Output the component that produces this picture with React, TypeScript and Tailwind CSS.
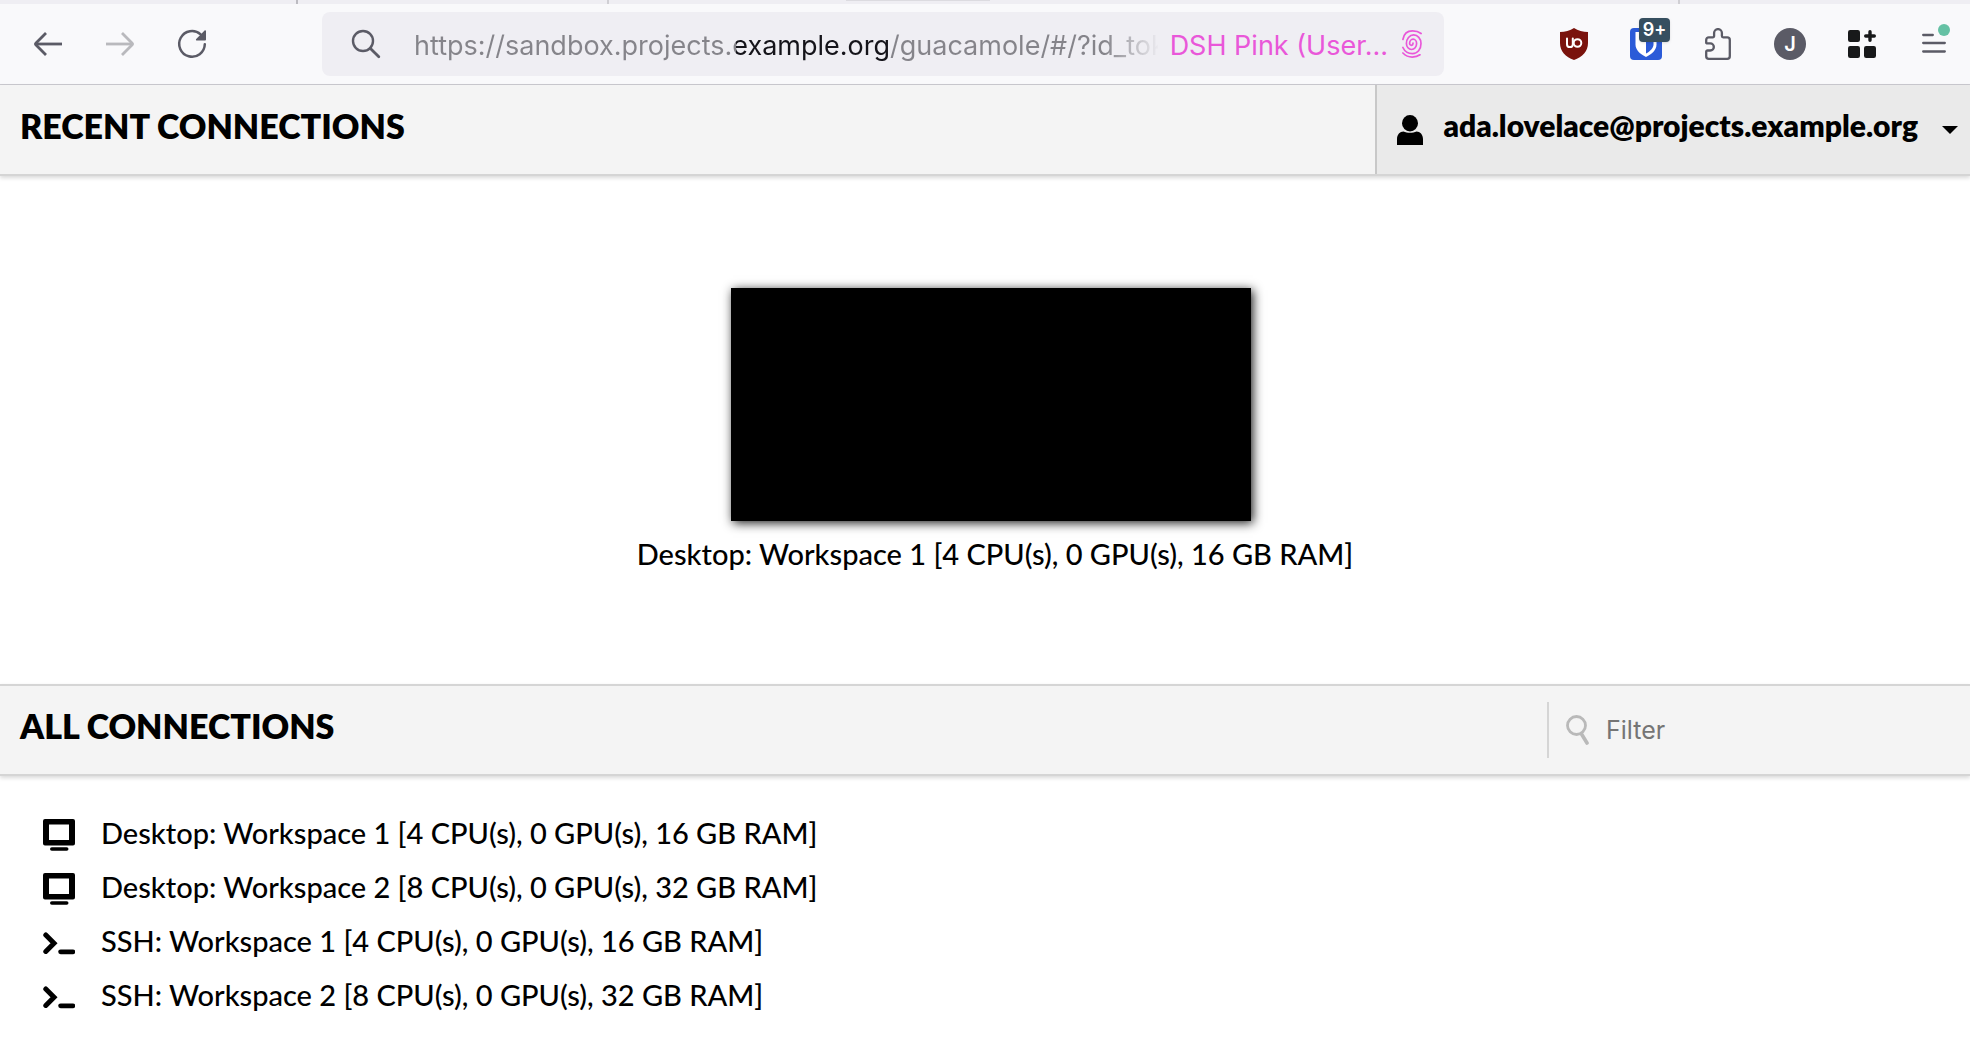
import type { ReactNode } from "react";

const connections = [
  { kind: "desktop", name: "Desktop: Workspace 1 [4 CPU(s), 0 GPU(s), 16 GB RAM]" },
  { kind: "desktop", name: "Desktop: Workspace 2 [8 CPU(s), 0 GPU(s), 32 GB RAM]" },
  { kind: "ssh", name: "SSH: Workspace 1 [4 CPU(s), 0 GPU(s), 16 GB RAM]" },
  { kind: "ssh", name: "SSH: Workspace 2 [8 CPU(s), 0 GPU(s), 32 GB RAM]" },
];

function ToolButton({ label, disabled, children }: { label: string; disabled?: boolean; children: ReactNode }) {
  return (
    <button
      type="button"
      aria-label={label}
      disabled={disabled}
      className="flex h-20 w-[72px] shrink-0 items-center justify-center"
    >
      {children}
    </button>
  );
}

function BackArrow({ className }: { className: string }) {
  return (
    <svg viewBox="0 0 32 32" className={className} fill="none" stroke="currentColor" strokeWidth="2.8">
      <path d="M30 16H4" />
      <path d="M14 5 3.8 15.2a1.1 1.1 0 0 0 0 1.6L14 27" strokeLinejoin="round" />
    </svg>
  );
}

function ReloadIcon() {
  return (
    <svg viewBox="0 0 32 32" className="size-8" fill="none">
      <path d="M28.8 16.2A12.8 12.8 0 1 1 24.6 6.4" stroke="#5b5b66" strokeWidth="2.5" strokeLinecap="round" />
      <path d="M30 3v8.6a.9.9 0 0 1-.9.9h-8.2c-.9 0-1.300-1-.7-1.600L28.600 2.400c.5-.5 1.400-.2 1.400.6Z" fill="#5b5b66" />
    </svg>
  );
}

function SearchIcon() {
  return (
    <svg viewBox="0 0 32 32" className="size-8 shrink-0" fill="none" stroke="#5b5b66" strokeLinecap="round">
      <circle cx="13" cy="13" r="10" strokeWidth="2.400" />
      <path d="m20.200 20.200 8.600 8.600" strokeWidth="2.800" />
    </svg>
  );
}

function FingerprintIcon() {
  return (
    <svg viewBox="0 0 20 28" className="h-7 w-5 shrink-0" fill="none" stroke="#e957d9" strokeWidth="1.700" strokeLinecap="round">
      <path d="M.9 9.500C1.800 4 5.500.9 10.500.9c3.500 0 6.500 1 8.600 2.600" />
      <path d="M11 13.200A1.700 2 0 0 1 7.600 13.400A3.500 4.200 0 0 1 14.600 13.400A5.100 6 0 0 1 4.400 13.600A7.300 8.600 0 0 1 19 13.400C19 19.500 15.500 23.600 10.500 23.600C5.500 23.600 2.500 21 .9 17.500" />
      <path d="M.9 23c2.600 2.600 5.700 4.100 9.300 4.100 3.200 0 5.800-.8 7.800-2.300" />
    </svg>
  );
}

function UblockIcon() {
  return (
    <svg viewBox="0 0 28 32" className="h-8 w-7">
      <path d="M14 0c4 2.600 9 4 14 4v11c0 8.500-5.500 14-14 17C5.500 29 0 23.500 0 15V4c5 0 10-1.400 14-4Z" fill="#7a130d" />
      <path d="M7 10.500v5.700a2.900 2.900 0 0 0 5.800 0v-5.700" fill="none" stroke="#fff" strokeWidth="2" strokeLinecap="round" />
      <circle cx="17.500" cy="15" r="3.800" fill="none" stroke="#fff" strokeWidth="2" />
    </svg>
  );
}

function BitwardenIcon() {
  return (
    <span className="relative block size-8">
      <svg viewBox="0 0 32 32" className="size-8">
        <rect width="32" height="32" rx="4" fill="#2b5bd8" />
        <path d="M5.500 4h21v12.500c0 5.500-4.500 9.500-10.500 12.500-6-3-10.500-7-10.500-12.500Z" fill="#fff" />
        <path d="M16 7h7.500v9.500c0 3.600-3.300 6.700-7.500 9.100Z" fill="#2b5bd8" />
      </svg>
      <span className="absolute -top-2.5 left-[9px] flex h-6 w-[31px] items-center justify-center rounded bg-[#364f60] font-['Inter',sans-serif] text-lg font-semibold text-white shadow-sm">
        9+
      </span>
    </span>
  );
}

function PuzzleIcon() {
  return (
    <svg viewBox="0 0 26 32" className="h-8 w-[26px]" fill="none" stroke="#5b5b66" strokeWidth="2.300" strokeLinejoin="round">
      <path d="M1.200 15V12a2.600 2.600 0 0 1 2.600-2.600h4a1.300 1.300 0 0 0 1.300-1.300V5a3.900 3.900 0 0 1 7.800 0v3.100a1.300 1.300 0 0 0 1.300 1.300h4a2.600 2.600 0 0 1 2.600 2.600v16.200a2.600 2.600 0 0 1-2.600 2.600H3.800a2.600 2.600 0 0 1-2.600-2.600v-4.400a1.300 1.300 0 0 1 1.300-1.300h2.800a3.550 3.550 0 0 0 0-7.100H2.200a1 1 0 0 1-1-1Z" />
    </svg>
  );
}

function GridPlusIcon() {
  return (
    <svg viewBox="0 0 28 28" className="size-7" fill="#18191a">
      <rect width="12" height="12" rx="2.200" />
      <rect y="16" width="12" height="12" rx="2.200" />
      <rect x="16" y="16" width="12" height="12" rx="2.200" />
      <path d="M22 1.700v8.600M17.700 6h8.600" stroke="#18191a" strokeWidth="3.400" strokeLinecap="round" />
    </svg>
  );
}

function MenuIcon() {
  return (
    <span className="relative block h-7 w-6">
      <svg viewBox="0 0 24 28" className="h-7 w-6" stroke="#5b5b66" strokeWidth="2.300" strokeLinecap="round">
        <path d="M1.200 5h9.600M1.200 13h21.600M1.200 21.500h21.600" />
      </svg>
      <span className="absolute -top-1.5 left-4 size-3 rounded-full bg-[#65c1a4]" />
    </span>
  );
}

function DesktopIcon() {
  return (
    <svg viewBox="0 0 32 32" className="size-8">
      <path fillRule="evenodd" d="M2 0h28a2 2 0 0 1 2 2v22.500a2 2 0 0 1-2 2H2a2 2 0 0 1-2-2V2a2 2 0 0 1 2-2Zm4 5.500v15.500h20V5.500Z" />
      <path d="M8.800 30h14.900" stroke="#000" strokeWidth="3.600" strokeLinecap="round" />
    </svg>
  );
}

function TerminalIcon() {
  return (
    <svg viewBox="0 0 32 32" className="size-8" fill="none" stroke="#000" strokeLinecap="round" strokeLinejoin="round">
      <path d="m2.800 8 8.200 8.200-8.200 8.200" strokeWidth="5" strokeLinejoin="miter" />
      <path d="M17.600 24.800h12.200" strokeWidth="4.800" />
    </svg>
  );
}

export default function App() {
  return (
    <div className="min-h-screen bg-white font-['Lato',sans-serif] text-black">
      <div className="flex h-1 bg-[#efeef3]">
        <span className="ml-[296px] w-0.5 bg-[#bcbbc1]" />
        <span className="ml-[309px] w-0.5 bg-[#d0cfd4]" />
        <span className="ml-[237px] h-px w-36 bg-[#dcdbe0]" />
        <span className="mr-[290px] ml-auto w-0.5 bg-[#d0cfd4]" />
      </div>

      <nav aria-label="Browser toolbar" className="flex items-center border-b border-[#cbcad0] bg-[#f9f9fb] pl-3">
        <ToolButton label="Back">
          <BackArrow className="size-8 text-[#5b5b66]" />
        </ToolButton>
        <ToolButton label="Forward" disabled>
          <BackArrow className="size-8 rotate-180 text-[#b9b9bd]" />
        </ToolButton>
        <ToolButton label="Reload">
          <ReloadIcon />
        </ToolButton>
        <div className="mx-[94px] flex h-16 min-w-0 flex-1 items-center rounded-lg bg-[#efeef3] pr-[22px] pl-7 font-['Inter',sans-serif] text-[27px]">
          <SearchIcon />
          <input
            type="text"
            aria-label="Address"
            defaultValue="https://sandbox.projects.example.org/guacamole/#/?id_token"
            className="ml-8 min-w-0 flex-1 bg-[linear-gradient(90deg,#85848a_322px,#15141a_322px,#15141a_475px,#85848a_475px,#85848a_690px,transparent_746px)] bg-clip-text pt-1 text-transparent outline-none"
          />
          <button type="button" className="ml-3 flex items-center gap-3.5 text-[#e957d9]">
            <span className="pt-1">DSH Pink (User...</span>
            <FingerprintIcon />
          </button>
        </div>
        <ToolButton label="uBlock Origin">
          <UblockIcon />
        </ToolButton>
        <ToolButton label="Bitwarden">
          <BitwardenIcon />
        </ToolButton>
        <ToolButton label="Extensions">
          <PuzzleIcon />
        </ToolButton>
        <ToolButton label="Account">
          <span className="flex size-8 items-center justify-center rounded-full bg-[#5b5b66] font-['Inter',sans-serif] text-xl font-semibold text-white">
            J
          </span>
        </ToolButton>
        <ToolButton label="Add-ons">
          <GridPlusIcon />
        </ToolButton>
        <ToolButton label="Menu">
          <MenuIcon />
        </ToolButton>
      </nav>

      <header className="flex h-[91px] items-stretch justify-between border-b-2 border-[#d5d5d5] bg-[#f4f4f4] shadow-[0_2px_4px_rgba(0,0,0,0.15)]">
        <h1 className="pt-4 pl-5 text-[34px] leading-[50px] font-extrabold">RECENT CONNECTIONS</h1>
        <button
          type="button"
          className="flex items-center border-l-2 border-[#c8c8c8] bg-[#eaeaea] pr-3 pl-5 text-[30px] font-extrabold"
        >
          <svg viewBox="0 0 26 30" className="h-[30px] w-[26px]">
            <ellipse cx="13" cy="8.200" rx="8" ry="8.200" />
            <path d="M0 30v-6c0-4.500 3-7.500 6.500-7.500 3.500 1.800 9.500 1.800 13 0 3.500 0 6.500 3 6.500 7.500v6Z" />
          </svg>
          <span className="ml-5 pb-2">ada.lovelace@projects.example.org</span>
          <svg viewBox="0 0 16 8" className="ml-6 h-2 w-4">
            <path d="M0 0h16L8 8Z" />
          </svg>
        </button>
      </header>

      <section className="flex h-[508px] flex-col items-center justify-center pt-2">
        <a href="#workspace-1" className="flex flex-col items-center text-[29px] leading-[54px] font-medium">
          <span className="mb-1.5 ml-3 h-[233px] w-[520px] bg-black shadow-[2px_2px_10px_rgba(0,0,0,0.9)]" />
          <span className="pl-5">{connections[0].name}</span>
        </a>
      </section>

      <section>
        <header className="flex h-[92px] items-center justify-between border-y-2 border-[#d5d5d5] bg-[#f4f4f4] shadow-[0_2px_4px_rgba(0,0,0,0.15)]">
          <h2 className="pb-2 pl-5 text-[34px] leading-[50px] font-extrabold">ALL CONNECTIONS</h2>
          <label className="flex h-14 w-[423px] items-center border-l-2 border-[#d5d5d5] pl-[17px]">
            <svg viewBox="0 0 24 30" className="h-[30px] w-6 shrink-0" fill="none" stroke="#b9b9b9" strokeLinecap="round">
              <circle cx="10.500" cy="10.500" r="9" strokeWidth="2.800" />
              <path d="m15.500 19 5.500 9" strokeWidth="3.600" />
            </svg>
            <input
              type="text"
              aria-label="Filter"
              placeholder="Filter"
              className="ml-4 min-w-0 flex-1 bg-transparent pt-0.5 font-['Inter',sans-serif] text-[25px] outline-none placeholder:text-[#757575]"
            />
          </label>
        </header>
        <ul className="px-[43px] pt-8 text-[29px] leading-[50px] font-medium">
          {connections.map((c) => (
            <li key={c.name}>
              <a href="#connect" className="flex items-center gap-[26px]">
                {c.kind === "desktop" ? <DesktopIcon /> : <TerminalIcon />}
                <span className="pb-1">{c.name}</span>
              </a>
            </li>
          ))}
        </ul>
      </section>
    </div>
  );
}
